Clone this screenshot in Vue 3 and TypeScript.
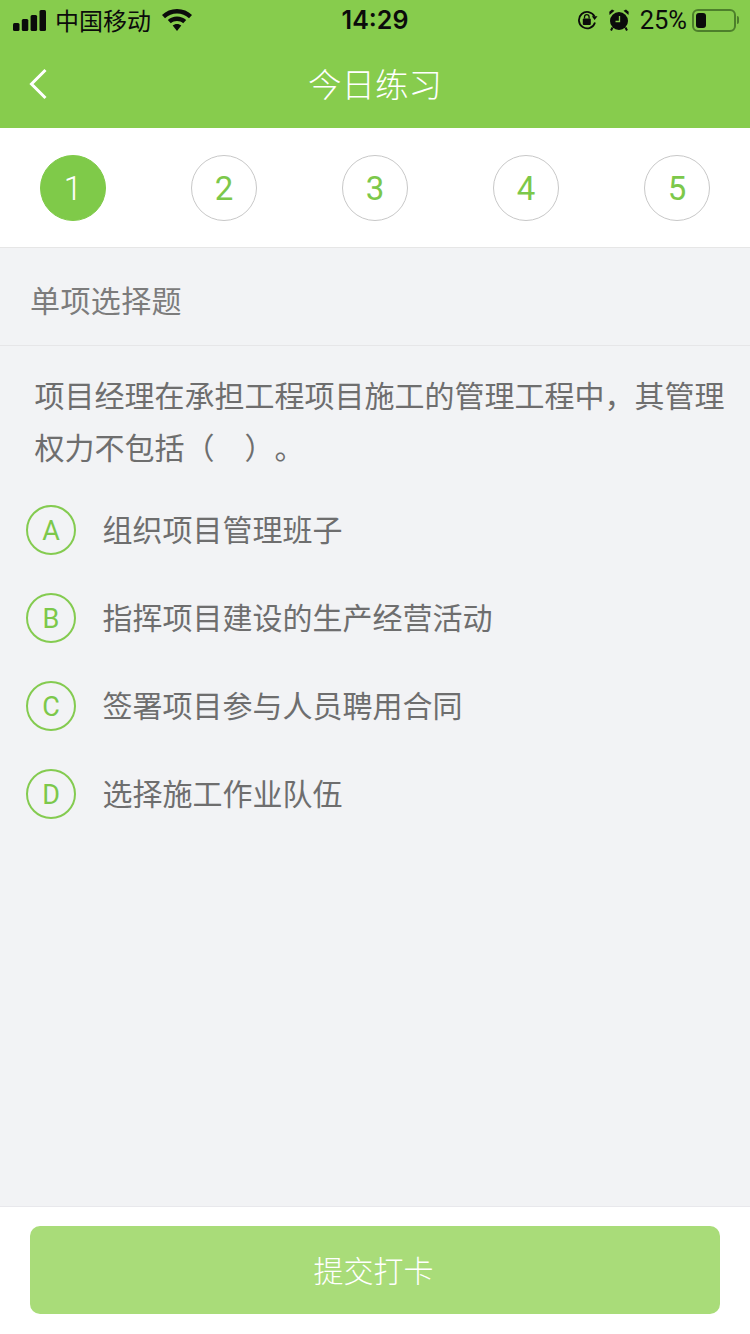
<script setup lang="ts">
import { ref } from 'vue';

const steps = [1, 2, 3, 4, 5];
const current = ref(1);

const question = '项目经理在承担工程项目施工的管理工程中，其管理权力不包括（　）。';
const options = [
  { key: 'A', text: '组织项目管理班子' },
  { key: 'B', text: '指挥项目建设的生产经营活动' },
  { key: 'C', text: '签署项目参与人员聘用合同' },
  { key: 'D', text: '选择施工作业队伍' },
];
</script>

<template>
  <div class="page">
    <header class="header">
      <div class="status-bar">
        <div class="status-left">
          <svg class="signal" width="33" height="21" viewBox="0 0 33 21">
            <rect x="0" y="13" width="6.500" height="8" rx="1.500" />
            <rect x="8.800" y="9" width="6.500" height="12" rx="1.500" />
            <rect x="17.600" y="5" width="6.500" height="16" rx="1.500" />
            <rect x="26.500" y="0" width="6.500" height="21" rx="1.500" />
          </svg>
          <span class="carrier">中国移动</span>
          <svg class="wifi" width="30" height="22" viewBox="0 0 30 22">
            <path d="M15 0C9 0 4 2.300 0 6l3 3.300C6.300 6.300 10.400 4.500 15 4.500s8.700 1.800 12 4.800L30 6C26 2.300 21 0 15 0z" />
            <path d="M15 7.500c-3.500 0-6.700 1.300-9.200 3.500l3 3.300C10.500 12.900 12.600 12 15 12s4.500.9 6.200 2.300l3-3.300c-2.500-2.200-5.700-3.500-9.200-3.500z" />
            <path d="M15 15c-1.700 0-3.200.6-4.300 1.600L15 22l4.300-5.400C18.200 15.600 16.700 15 15 15z" />
          </svg>
        </div>
        <span class="time">14:29</span>
        <div class="status-right">
          <svg class="lock" width="21" height="20" viewBox="0 0 21 20">
            <path d="M17.500 6.500A8.200 8.200 0 1 0 18 12.500" fill="none" stroke="#0b0b0b" stroke-width="1.800" />
            <path d="M14.800 6.200h5.700L17.600 10z" />
            <rect x="5.800" y="8.500" width="8" height="6.500" rx="1" />
            <path d="M7.500 8.500V7a2.300 2.300 0 0 1 4.600 0v1.500" fill="none" stroke="#0b0b0b" stroke-width="1.300" />
          </svg>
          <svg class="alarm" width="20" height="22" viewBox="0 0 20 22">
            <circle cx="10" cy="12" r="9" />
            <path d="M.5 6 5.500 1.800 3 .5 .3 2.800zM19.500 6 14.500 1.800 17 .5 19.700 2.800z" />
            <path d="M3.500 18.500 2 21.500M16.500 18.500 18 21.500" stroke="#0b0b0b" stroke-width="2" />
            <path d="M10.500 7v5.500H6.500" fill="none" stroke="#87cc4d" stroke-width="1.300" />
          </svg>
          <span class="percent">25%</span>
          <div class="battery">
            <div class="battery-level"></div>
          </div>
          <div class="battery-tip"></div>
        </div>
      </div>
      <div class="nav-bar">
        <svg class="back" width="20" height="32" viewBox="0 0 20 32">
          <path d="M17.500 2 3.500 16l14 14" fill="none" stroke="#fff" stroke-width="3" />
        </svg>
        <h1 class="title">今日练习</h1>
      </div>
    </header>

    <div class="steps">
      <div
        v-for="step in steps"
        :key="step"
        class="step"
        :class="{ active: step === current }"
      >
        {{ step }}
      </div>
    </div>

    <main class="content">
      <div class="type-row">单项选择题</div>
      <p class="question">{{ question }}</p>
      <ul class="options">
        <li v-for="item in options" :key="item.key" class="option">
          <span class="option-key">{{ item.key }}</span>
          <span class="option-text">{{ item.text }}</span>
        </li>
      </ul>
    </main>

    <footer class="footer">
      <button class="submit" type="button">提交打卡</button>
    </footer>
  </div>
</template>

<style>
html,
body {
  margin: 0;
  background: #fff;
}
</style>

<style scoped>
.page {
  display: flex;
  flex-direction: column;
  width: 750px;
  height: 1334px;
  overflow: hidden;
  background: #f2f3f5;
  font-family: "Liberation Sans", "Noto Sans CJK SC", sans-serif;
}

.header {
  height: 128px;
  background: #87cc4d;
}

.status-bar {
  display: flex;
  align-items: center;
  justify-content: space-between;
  height: 40px;
  color: #0b0b0b;
  fill: #0b0b0b;
}

.status-left {
  display: flex;
  flex: 1;
  align-items: center;
  padding-left: 13px;
}

.signal {
  margin-top: 1px;
}

.carrier {
  margin-top: -2px;
  margin-left: 9px;
  font-size: 24px;
  font-weight: 400;
}

.wifi {
  margin-left: 11px;
}

.time {
  width: 68px;
  margin-right: 2px;
  font-family: Inter, "Liberation Sans", sans-serif;
  font-size: 25px;
  font-weight: 600;
  text-align: center;
}

.status-right {
  display: flex;
  flex: 1;
  align-items: center;
  justify-content: flex-end;
  padding-right: 11px;
}

.alarm {
  margin-left: 11px;
}

.percent {
  margin-left: 11px;
  font-family: Roboto, "Liberation Sans", sans-serif;
  font-size: 25.500px;
  font-weight: 400;
}

.battery {
  box-sizing: border-box;
  width: 44px;
  height: 23px;
  margin-left: 5px;
  padding: 2px;
  border: 2px solid #4d7f2b;
  border-radius: 6px;
}

.battery-level {
  width: 10px;
  height: 100%;
  border-radius: 3px;
  background: #0b0b0b;
}

.battery-tip {
  width: 2px;
  height: 8px;
  margin-left: 1px;
  border-radius: 0 2px 2px 0;
  background: #4d7f2b;
}

.nav-bar {
  position: relative;
  display: flex;
  align-items: center;
  justify-content: center;
  height: 88px;
}

.back {
  position: absolute;
  top: 28px;
  left: 28px;
}

.title {
  margin: 0 0 4px;
  color: #fff;
  font-size: 33.500px;
  font-weight: 300;
}

.steps {
  display: flex;
  flex-shrink: 0;
  justify-content: space-between;
  box-sizing: border-box;
  height: 120px;
  padding: 27px 40px 0;
  background: #fff;
  border-bottom: 1px solid #e6e6e6;
}

.step {
  display: flex;
  align-items: center;
  justify-content: center;
  box-sizing: border-box;
  width: 66px;
  height: 66px;
  border: 1px solid #c8c8c8;
  border-radius: 50%;
  color: #7cc84a;
  font-family: Roboto, "Liberation Sans", sans-serif;
  font-size: 33px;
  font-weight: 400;
}

.step.active {
  border-color: #7fca49;
  background: #7fca49;
  color: #fff;
  font-weight: 300;
}

.content {
  flex: 1;
}

.type-row {
  box-sizing: border-box;
  height: 98px;
  padding-left: 30px;
  border-bottom: 1px solid #e6e6e8;
  color: #7c7c7c;
  font-size: 30px;
  font-weight: 400;
  letter-spacing: 0.4px;
  line-height: 107px;
}

.question {
  margin: 25px 0 11px;
  padding: 0 20px 0 34.500px;
  color: #6e6e6e;
  font-size: 30px;
  font-weight: 400;
  line-height: 52px;
  text-spacing-trim: space-all;
}

.options {
  margin: 0;
  padding: 0 0 0 26px;
  list-style: none;
}

.option {
  display: flex;
  align-items: center;
  height: 88px;
}

.option-key {
  display: flex;
  align-items: center;
  justify-content: center;
  box-sizing: border-box;
  width: 50px;
  height: 50px;
  padding-top: 2px;
  border: 2px solid #84cb50;
  border-radius: 50%;
  color: #7cc84a;
  font-family: Roboto, "Liberation Sans", sans-serif;
  font-size: 27px;
  font-weight: 400;
}

.option-text {
  margin-top: -5px;
  margin-left: 26.500px;
  color: #6e6e6e;
  font-size: 30px;
  font-weight: 400;
}

.footer {
  box-sizing: border-box;
  height: 128px;
  padding: 19px 30px 0;
  background: #fff;
  border-top: 1px solid #e8e8ec;
}

.submit {
  display: block;
  width: 100%;
  height: 88px;
  padding: 0 3px 3px 0;
  border: 0;
  border-radius: 10px;
  background: #a9dc79;
  color: #fff;
  font-family: inherit;
  font-size: 30px;
  font-weight: 300;
}
</style>
